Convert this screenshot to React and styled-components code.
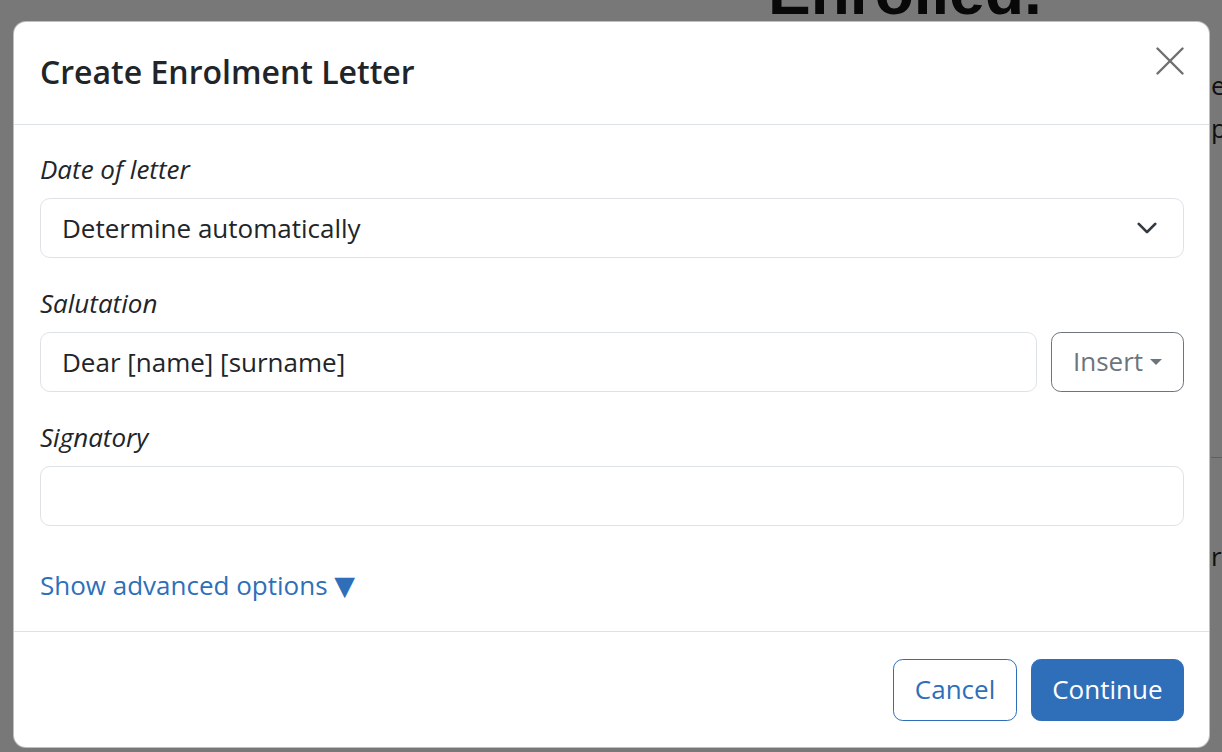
import styled, { createGlobalStyle } from "styled-components"

const GlobalStyle = createGlobalStyle`
  html, body {
    margin: 0;
    padding: 0;
    width: 1222px;
    height: 752px;
    overflow: hidden;
    font-family: "Open Sans", "Liberation Sans", sans-serif;
    color: #212529;
    background: #fff;
  }
`

const Page = styled.div`
  position: relative;
  width: 1222px;
  height: 752px;
  overflow: hidden;
`
const PageHeading = styled.h1`
  margin: -40px 0 0 768px;
  font-family: "Liberation Sans", Arial, sans-serif;
  font-size: 64px;
  font-weight: 700;
  color: #111;
  line-height: 64px;
`
const SideColumn = styled.div`
  margin-left: 1211px;
  display: flex;
  flex-direction: column;
  font-size: 26px;
  color: #222;
  white-space: nowrap;
`
const SideText = styled.div`
  line-height: 39px;
  margin-top: ${p => p.$mt || 0}px;
`
const SideRule = styled.div`
  height: 1px;
  background: #ccc;
  margin-top: ${p => p.$mt || 0}px;
`

const Backdrop = styled.div`
  position: absolute;
  inset: 0;
  background: rgba(0, 0, 0, 0.53);
  display: flex;
  justify-content: flex-start;
  align-items: flex-start;
  padding: 21px 0 0 13px;
`
const Modal = styled.div`
  width: 1197px;
  box-sizing: border-box;
  background: #fff;
  border: 1px solid rgba(0, 0, 0, 0.25);
  border-radius: 13px;
  display: flex;
  flex-direction: column;
  overflow: hidden;
`
const Header = styled.div`
  height: 103px;
  box-sizing: border-box;
  display: flex;
  align-items: center;
  justify-content: space-between;
  padding: 0 24px 4px 26px;
  border-bottom: 1.6px solid #dee2e6;
`
const Title = styled.h5`
  margin: 0;
  font-size: 32px;
  font-weight: 600;
  color: #212529;
`
const CloseButton = styled.button`
  border: none;
  background: none;
  padding: 0;
  width: 30px;
  height: 30px;
  margin-top: -20px;
  cursor: pointer;
  display: flex;
  align-items: center;
  justify-content: center;
`
const Body = styled.div`
  padding: 25px 25px 26px 26px;
  display: flex;
  flex-direction: column;
`
const Label = styled.label`
  font-style: italic;
  font-size: 26px;
  line-height: 39px;
  color: #212529;
  margin-bottom: 9px;
`
const Field = styled.div`
  margin-bottom: ${p => (p.$last ? 0 : 26)}px;
  display: flex;
  flex-direction: column;
`
const Row = styled.div`
  display: flex;
  gap: 14px;
`
const Control = styled.div`
  flex-grow: 1;
  min-width: 0;
  height: 60px;
  box-sizing: border-box;
  border: 1.6px solid #dee2e6;
  border-radius: 9.75px;
  padding: 0 21px;
  display: flex;
  align-items: center;
  justify-content: space-between;
  font-size: 26px;
  color: #212529;
`
const InsertButton = styled.button`
  width: 133px;
  height: 60px;
  box-sizing: border-box;
  border: 1.6px solid #6c757d;
  border-radius: 9.75px;
  background: #fff;
  color: #6c757d;
  font-family: inherit;
  font-size: 26px;
  display: flex;
  align-items: center;
  justify-content: center;
  gap: 7px;
  padding: 0 0 2px 0;
`
const Caret = styled.span`
  width: 0;
  height: 0;
  border-left: 6px solid transparent;
  border-right: 6px solid transparent;
  border-top: 6px solid #6c757d;
  margin-top: 2px;
`
const AdvancedLink = styled.a`
  font-size: 26px;
  line-height: 39px;
  color: #2f6fb9;
  text-decoration: none;
  margin-top: 40px;
  cursor: pointer;
`
const Triangle = styled.span`
  font-family: "DejaVu Sans", sans-serif;
  font-size: 27px;
`
const Footer = styled.div`
  border-top: 1.6px solid #dee2e6;
  padding: 27px 25px 26px 26px;
  display: flex;
  justify-content: flex-end;
  gap: 14px;
`
const Button = styled.button`
  height: 62px;
  box-sizing: border-box;
  padding: 0 20.5px 2px;
  border-radius: 9.75px;
  border: 1.6px solid #2f6fb9;
  background: ${p => (p.$primary ? "#2f6fb9" : "#fff")};
  color: ${p => (p.$primary ? "#fff" : "#2f6fb9")};
  font-family: inherit;
  font-size: 26px;
  cursor: pointer;
`

const Chevron = () => (
  <svg width="22" height="22" viewBox="0 0 16 16" fill="none" stroke="#343a40" strokeWidth="2" strokeLinecap="round" strokeLinejoin="round" style={{ marginRight: 4 }}>
    <path d="M2 5l6 6 6-6" />
  </svg>
)

const CloseIcon = () => (
  <svg width="28" height="28" viewBox="0 0 28 28" stroke="#6f6f6f" strokeWidth="2.4" strokeLinecap="round">
    <line x1="1.5" y1="1.5" x2="26.5" y2="26.5" />
    <line x1="26.5" y1="1.5" x2="1.5" y2="26.5" />
  </svg>
)

const App = () => {
  return (
    <Page>
      <GlobalStyle />
      <PageHeading>Enrolled.</PageHeading>
      <SideColumn>
        <SideText $mt={42}>enrolment</SideText>
        <SideText $mt={4}>pending</SideText>
        <SideRule $mt={309} />
        <SideText $mt={79}>records</SideText>
      </SideColumn>
      <Backdrop>
        <Modal>
          <Header>
            <Title>Create Enrolment Letter</Title>
            <CloseButton aria-label="Close">
              <CloseIcon />
            </CloseButton>
          </Header>
          <Body>
            <Field>
              <Label>Date of letter</Label>
              <Control>
                <span>Determine automatically</span>
                <Chevron />
              </Control>
            </Field>
            <Field>
              <Label>Salutation</Label>
              <Row>
                <Control>Dear [name] [surname]</Control>
                <InsertButton>
                  Insert <Caret />
                </InsertButton>
              </Row>
            </Field>
            <Field $last>
              <Label>Signatory</Label>
              <Control />
            </Field>
            <AdvancedLink>
              Show advanced options <Triangle>▼</Triangle>
            </AdvancedLink>
          </Body>
          <Footer>
            <Button>Cancel</Button>
            <Button $primary>Continue</Button>
          </Footer>
        </Modal>
      </Backdrop>
    </Page>
  )
}

export default App
